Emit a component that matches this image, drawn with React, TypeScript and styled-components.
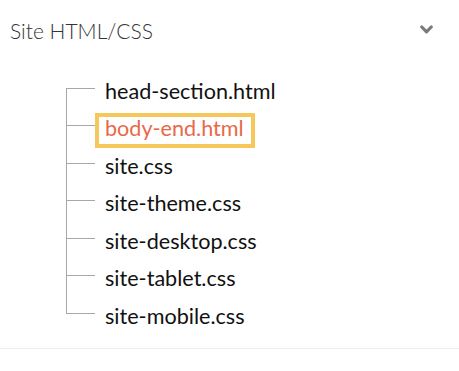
import React from "react";
import styled, { createGlobalStyle, css } from "styled-components";

const Global = createGlobalStyle`
  html, body { margin: 0; padding: 0; background: #fff; }
  body { font-family: "Source Sans Pro", Lato, "Noto Sans", sans-serif; }
`;

const Panel = styled.section`
  width: 459px;
  height: 371px;
  box-sizing: border-box;
  display: flex;
  flex-direction: column;
`;

const Header = styled.div`
  height: 58px;
  display: flex;
  align-items: center;
  justify-content: space-between;
  padding: 0 26px 0 10px;
`;

const Title = styled.h2`
  margin: 0;
  font-size: 21px;
  font-weight: 300;
  color: #333;
  line-height: 1;
  padding-top: 2px;
`;

const Chevron = styled.svg`
  width: 13px;
  height: 9px;
  display: block;
`;

const Tree = styled.ul`
  list-style: none;
  margin: 11px 0 0 66px;
  padding: 0;
`;

const Item = styled.li<{ $pos: "first" | "mid" | "last" }>`
  position: relative;
  height: 37.5px;
  box-sizing: border-box;
  display: flex;
  align-items: flex-start;
  padding: 6.75px 0 0 29px;

  &::before {
    content: "";
    position: absolute;
    left: 0;
    width: 1px;
    background: #a8a8a8;
    ${(p) =>
      p.$pos === "first"
        ? css`top: 50%; bottom: 0;`
        : p.$pos === "last"
        ? css`top: 0; height: 50%;`
        : css`top: 0; bottom: 0;`}
  }

  &::after {
    content: "";
    position: absolute;
    left: 0;
    top: 50%;
    width: 29px;
    height: 1px;
    background: #a8a8a8;
  }
`;

const FileName = styled.span<{ $active?: boolean }>`
  display: block;
  font-size: 21.6px;
  line-height: 22px;
  white-space: nowrap;
  color: ${(p) => (p.$active ? "#e8694a" : "#111")};
  padding: 0 7px 5px 6px;
  border: 4px solid ${(p) => (p.$active ? "#f6c85c" : "transparent")};
`;

const Divider = styled.hr`
  margin: 16px 0 0;
  border: 0;
  height: 1px;
  background: #ececec;
`;

const files = [
  "head-section.html",
  "body-end.html",
  "site.css",
  "site-theme.css",
  "site-desktop.css",
  "site-tablet.css",
  "site-mobile.css",
];

export default function App() {
  return (
    <>
      <Global />
      <Panel>
        <Header>
          <Title>Site HTML/CSS</Title>
          <Chevron viewBox="0 0 13 9">
            <path d="M1.8 2 L6.5 6.8 L11.2 2" fill="none" stroke="#7a7a7a" strokeWidth="3.2" strokeLinecap="round" strokeLinejoin="round" />
          </Chevron>
        </Header>
        <Tree>
          {files.map((f, i) => (
            <Item key={f} $pos={i === 0 ? "first" : i === files.length - 1 ? "last" : "mid"}>
              <FileName $active={f === "body-end.html"}>{f}</FileName>
            </Item>
          ))}
        </Tree>
        <Divider />
      </Panel>
    </>
  );
}
